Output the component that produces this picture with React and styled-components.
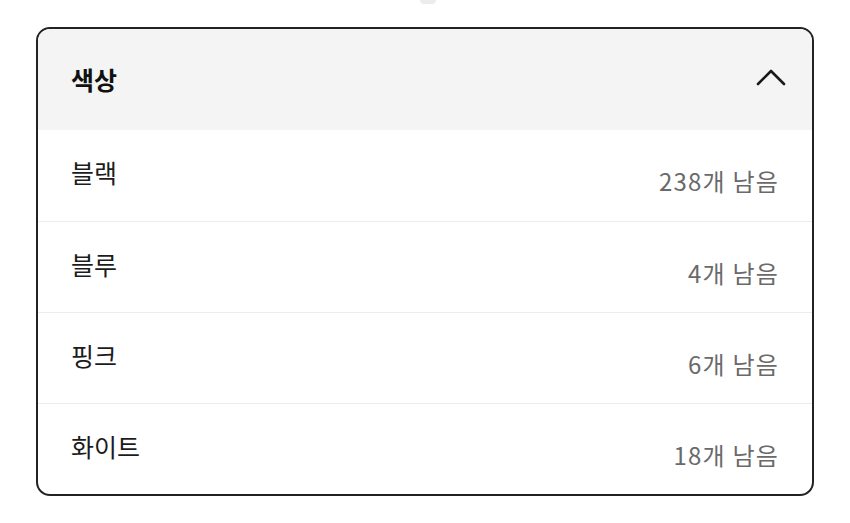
import React from 'react';
import styled, { createGlobalStyle } from 'styled-components';

const GlobalStyle = createGlobalStyle`
  html, body {
    margin: 0;
    padding: 0;
    background: #ffffff;
  }
  body {
    font-family: "Noto Sans CJK KR", "Noto Sans", sans-serif;
  }
`;

const Page = styled.div`
  width: 850px;
  height: 523px;
  padding-left: 36px;
  box-sizing: border-box;
`;

const Handle = styled.div`
  width: 16px;
  height: 4px;
  margin: 0 0 23px 384px;
  background: #ececec;
  border-radius: 0 0 8px 8px;
`;

const Panel = styled.div`
  width: 778px;
  box-sizing: border-box;
  border: 2px solid #222222;
  border-radius: 14px;
  overflow: hidden;
  background: #ffffff;
`;

const Header = styled.div`
  display: flex;
  align-items: center;
  justify-content: space-between;
  height: 101px;
  padding: 0 26px 0 33px;
  background: #f4f4f4;
`;

const Title = styled.span`
  font-size: 25px;
  font-weight: 700;
  color: #111111;
  line-height: 1;
`;

const Chevron = styled.svg`
  width: 30px;
  height: 18px;
  margin-top: -6px;
`;

const Row = styled.div`
  display: flex;
  align-items: center;
  justify-content: space-between;
  height: 91px;
  box-sizing: border-box;
  padding: 0 34px 0 33px;
  border-top: ${props => (props.$first ? 'none' : '1px solid #ececec')};
`;

const Label = styled.span`
  font-size: 25px;
  line-height: 1;
  color: #1c1c1c;
  margin-bottom: 6px;
`;

const Count = styled.span`
  font-size: 24px;
  line-height: 1;
  color: #6a6a6a;
  letter-spacing: 1.2px;
  margin-top: 11px;
  margin-right: -1px;
`;

const colors = [
  { name: '블랙', left: 238 },
  { name: '블루', left: 4 },
  { name: '핑크', left: 6 },
  { name: '화이트', left: 18 },
];

function App() {
  return (
    <>
      <GlobalStyle />
      <Page>
        <Handle />
        <Panel>
          <Header>
            <Title>색상</Title>
            <Chevron viewBox="0 0 30 18">
              <polyline
                points="2,16 15,3 28,16"
                fill="none"
                stroke="#1a1a1a"
                strokeWidth="2.6"
                strokeLinecap="round"
                strokeLinejoin="round"
              />
            </Chevron>
          </Header>
          {colors.map((c, i) => (
            <Row key={c.name} $first={i === 0}>
              <Label>{c.name}</Label>
              <Count>{c.left}개 남음</Count>
            </Row>
          ))}
        </Panel>
      </Page>
    </>
  );
}

export default App;
